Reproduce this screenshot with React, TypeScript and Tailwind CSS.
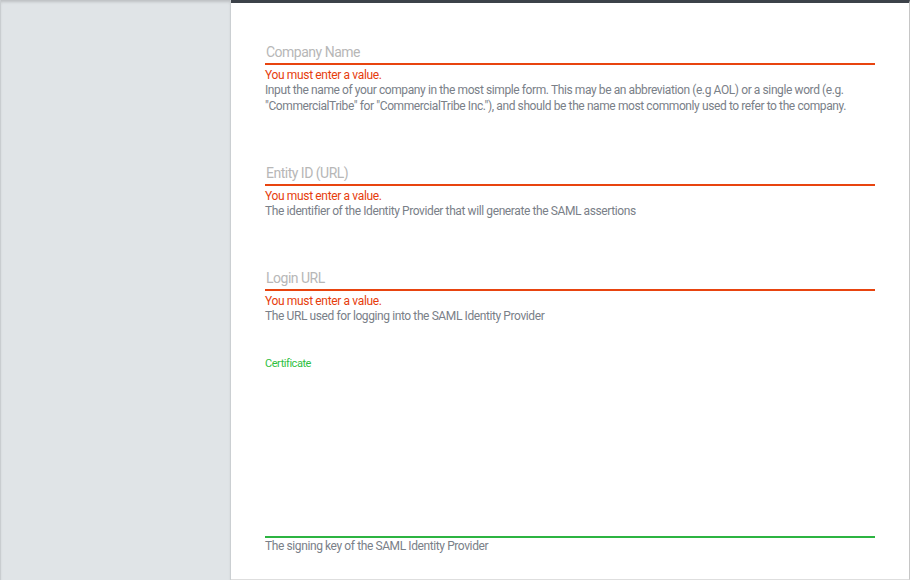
import React from 'react'

type Field = {
  label: string
  help: string
}

const fields: Field[] = [
  {
    label: 'Company Name',
    help: 'Input the name of your company in the most simple form. This may be an abbreviation (e.g AOL) or a single word (e.g. "CommercialTribe" for "CommercialTribe Inc."), and should be the name most commonly used to refer to the company.',
  },
  {
    label: 'Entity ID (URL)',
    help: 'The identifier of the Identity Provider that will generate the SAML assertions',
  },
  {
    label: 'Login URL',
    help: 'The URL used for logging into the SAML Identity Provider',
  },
]

function TextField({ label, help }: Field) {
  return (
    <div className="mb-[42px]">
      <input
        type="text"
        placeholder={label}
        className="block w-full h-[30px] pt-[6px] px-px bg-transparent text-[14px] tracking-[-0.5px] text-[#333] outline-none border-b-2 border-[#e8440f] placeholder:text-[#b7b7b7]"
      />
      <p className="mt-[4px] text-[12px] leading-[13px] tracking-[-0.35px] text-[#e63d0c]">You must enter a value.</p>
      <p className="text-[12px] leading-[16px] tracking-[-0.4px] text-[#7a8088]">{help}</p>
    </div>
  )
}

export default function App() {
  return (
    <div className="w-[910px] h-[580px] flex bg-white font-['Roboto','Liberation_Sans',sans-serif]">
      <aside className="w-[231px] h-full bg-[#e0e4e7] border-l border-r border-l-[#c9cdd0] border-r-[#cbcfd2] shadow-[inset_0_3px_3px_-1px_rgba(0,0,0,0.16)]" />

      <main className="flex-1 h-full border-t-[3px] border-t-[#3c4249] border-r border-r-[#c6c6c6] border-b border-b-[#dedede] px-[34px] pt-[32px]">
        {fields.map((f) => (
          <TextField key={f.label} {...f} />
        ))}

        <div className="-mt-[9px]">
          <label className="block text-[11px] leading-[14px] tracking-[-0.45px] text-[#2fbf3f]">Certificate</label>
          <textarea className="block w-full h-[167px] resize-none bg-transparent outline-none border-b-2 border-[#2cb441] text-[12px]" />
          <p className="text-[12px] leading-[16px] tracking-[-0.4px] text-[#7a8088]">The signing key of the SAML Identity Provider</p>
        </div>
      </main>
    </div>
  )
}
